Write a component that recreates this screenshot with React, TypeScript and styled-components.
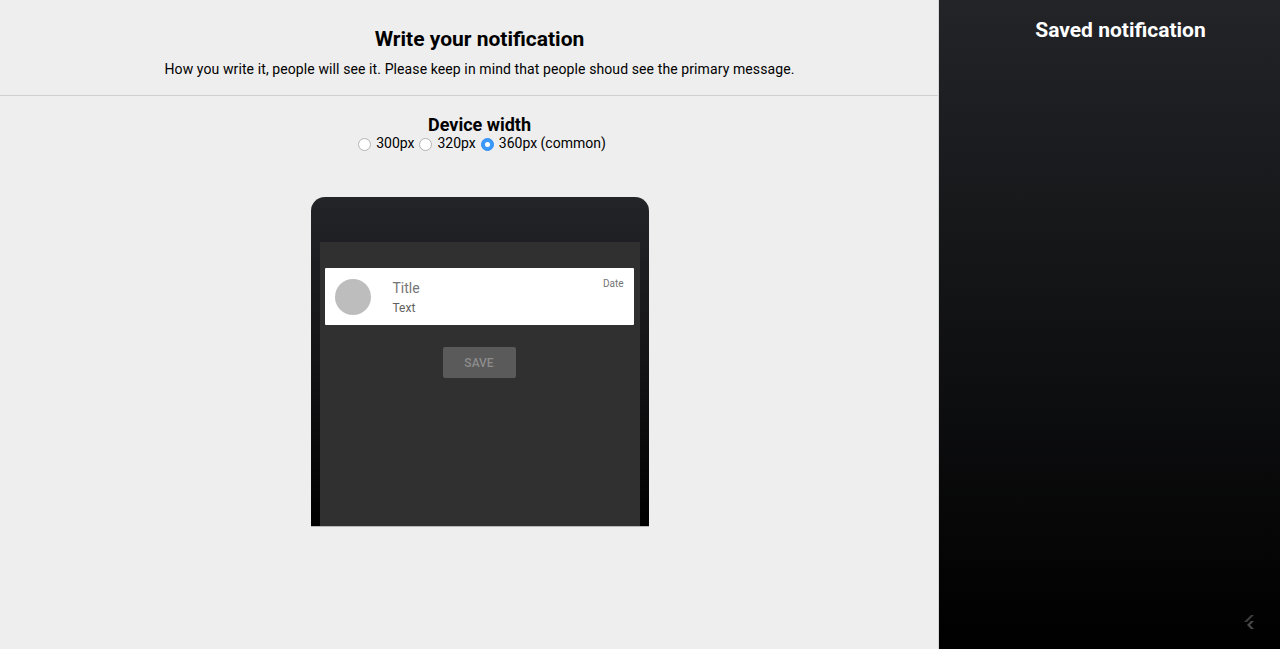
import { createGlobalStyle, styled } from "styled-components";

const GlobalStyle = createGlobalStyle`
    html, body {
        margin: 0;
        padding: 0;
        height: 100%;
        font-family: Roboto, "Liberation Sans", sans-serif;
    }
    #root {
        height: 100%;
    }
`

const Page = styled.div`
    display: flex;
    flex-direction: row;
    width: 1280px;
    height: 649px;
    overflow: hidden;
`

//editor side
const Editor = styled.main`
    width: 938px;
    flex-shrink: 0;
    background-color: #eeeeee;
    border-right: 1px solid #d6d6d6;
    display: flex;
    flex-direction: column;
`
const Header = styled.header`
    display: flex;
    flex-direction: column;
    align-items: center;
    padding: 26px 0 17px 21px;
    border-bottom: 1px solid #cfcfcf;
`
const Heading = styled.h1`
    margin: 0;
    font: bold 21px Roboto, sans-serif;
    color: #000;
    line-height: 26px;
`
const Description = styled.p`
    margin: 9px 0 0 0;
    font: 14px Roboto, sans-serif;
    letter-spacing: 0.1px;
    line-height: 17px;
    color: #000;
`
const Body = styled.section`
    display: flex;
    flex-direction: column;
    align-items: center;
    padding: 19px 0 0 21px;
    flex: 1;
`
const SubHeading = styled.h2`
    margin: 0;
    font: bold 18px Roboto, sans-serif;
    line-height: 20px;
`
const RadioRow = styled.div`
    display: flex;
    align-items: center;
    font: 14px Roboto, sans-serif;
    line-height: 17px;
`
const RadioLabel = styled.label`
    display: flex;
    align-items: center;
`
const Radio = styled.input`
    appearance: none;
    margin: 1px 5px 0 5px;
    width: 13px;
    height: 13px;
    border-radius: 50%;
    box-sizing: border-box;
    border: 1px solid #b4b4b4;
    background-color: #fff;
    display: grid;
    place-items: center;
    &:checked {
        border-color: #2f8ef5;
        background-color: #3b99fc;
    }
    &:checked::after {
        content: "";
        width: 5px;
        height: 5px;
        border-radius: 50%;
        background-color: #fff;
    }
`

//phone mockup
const Phone = styled.div`
    margin-top: 45px;
    width: 320px;
    height: 284px;
    padding: 45px 9px 0 9px;
    border-radius: 14px 14px 0 0;
    background: linear-gradient(to bottom, #232428 0%, #141416 50%, #000 100%);
    border-bottom: 1px solid #b8b8b8;
`
const Screen = styled.div`
    height: 100%;
    background-color: #303030;
    padding: 26px 6px 0 5px;
    box-sizing: border-box;
    display: flex;
    flex-direction: column;
    align-items: center;
`
const Card = styled.div`
    align-self: stretch;
    height: 57px;
    background-color: #fff;
    border-radius: 1px;
    display: flex;
    flex-direction: row;
    align-items: center;
    padding: 0 10px 0 10px;
`
const Avatar = styled.div`
    width: 36px;
    height: 36px;
    border-radius: 50%;
    background-color: #bdbdbd;
    margin-top: 1px;
`
const CardText = styled.div`
    display: flex;
    flex-direction: column;
    margin-left: 22px;
    flex: 1;
    padding-top: 2px;
`
const Title = styled.span`
    font: 14px Roboto, sans-serif;
    color: #757575;
    line-height: 18px;
`
const Text = styled.span`
    font: 12px Roboto, sans-serif;
    color: #616161;
    line-height: 16px;
    margin-top: 3px;
`
const DateLabel = styled.span`
    align-self: flex-start;
    margin-top: 10px;
    font: 10px Roboto, sans-serif;
    color: #757575;
`
const SaveButton = styled.button`
    margin-top: 22px;
    width: 73px;
    height: 31px;
    border: none;
    border-radius: 2px;
    background-color: #5a5a5a;
    color: #8c8c8c;
    font: 500 12px Roboto, sans-serif;
    padding: 0;
`

//saved side
const Sidebar = styled.aside`
    flex: 1;
    background: linear-gradient(to bottom, #232428 0%, #000 100%);
    display: flex;
    flex-direction: column;
    align-items: center;
    padding-left: 22px;
    position: relative;
`
const SidebarHeading = styled.h2`
    margin: 17px 0 0 0;
    font: bold 21px Roboto, sans-serif;
    color: #fff;
    line-height: 26px;
`
const Logo = styled.svg`
    position: absolute;
    right: 25px;
    bottom: 20px;
`

export default function App() {
    return (
        <Page>
            <GlobalStyle />
            <Editor>
                <Header>
                    <Heading>Write your notification</Heading>
                    <Description>
                        How you write it, people will see it. Please keep in mind that people shoud see the primary message.
                    </Description>
                </Header>
                <Body>
                    <SubHeading>Device width</SubHeading>
                    <RadioRow>
                        <RadioLabel><Radio type="radio" name="width" />300px</RadioLabel>
                        <RadioLabel><Radio type="radio" name="width" />320px</RadioLabel>
                        <RadioLabel><Radio type="radio" name="width" defaultChecked />360px (common)</RadioLabel>
                    </RadioRow>
                    <Phone>
                        <Screen>
                            <Card>
                                <Avatar />
                                <CardText>
                                    <Title>Title</Title>
                                    <Text>Text</Text>
                                </CardText>
                                <DateLabel>Date</DateLabel>
                            </Card>
                            <SaveButton>SAVE</SaveButton>
                        </Screen>
                    </Phone>
                </Body>
            </Editor>
            <Sidebar>
                <SidebarHeading>Saved notification</SidebarHeading>
                <Logo width="11" height="14" viewBox="0 0 11 14">
                    <path d="M7 0 L10 0 L3 7 L0 7 Z" fill="#3c3c3c" />
                    <path d="M7 6 L10 6 L6 10 L10 14 L7 14 L3 10 Z" fill="#4a4a4a" />
                </Logo>
            </Sidebar>
        </Page>
    )
}
